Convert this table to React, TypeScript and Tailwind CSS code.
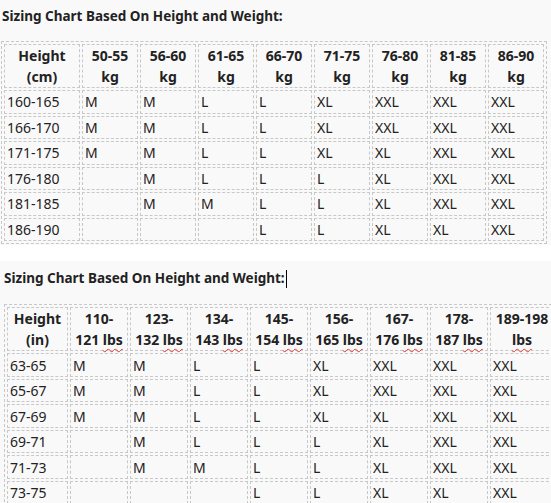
const kgHeaders = ["50-55", "56-60", "61-65", "66-70", "71-75", "76-80", "81-85", "86-90"];
const lbsHeaders = ["110-121", "123-132", "134-143", "145-154", "156-165", "167-176", "178-187", "189-198"];

const cmRows: string[][] = [
  ["160-165", "M", "M", "L", "L", "XL", "XXL", "XXL", "XXL"],
  ["166-170", "M", "M", "L", "L", "XL", "XXL", "XXL", "XXL"],
  ["171-175", "M", "M", "L", "L", "XL", "XL", "XXL", "XXL"],
  ["176-180", "", "M", "L", "L", "L", "XL", "XXL", "XXL"],
  ["181-185", "", "M", "M", "L", "L", "XL", "XXL", "XXL"],
  ["186-190", "", "", "", "L", "L", "XL", "XL", "XXL"],
];

const inRows: string[][] = [
  ["63-65", "M", "M", "L", "L", "XL", "XXL", "XXL", "XXL"],
  ["65-67", "M", "M", "L", "L", "XL", "XXL", "XXL", "XXL"],
  ["67-69", "M", "M", "L", "L", "XL", "XL", "XXL", "XXL"],
  ["69-71", "", "M", "L", "L", "L", "XL", "XXL", "XXL"],
  ["71-73", "", "M", "M", "L", "L", "XL", "XXL", "XXL"],
  ["73-75", "", "", "", "L", "L", "XL", "XL", "XXL"],
];

const cell = "border border-dashed border-[#c8c8c8] px-[2px] align-middle";

function Lbs() {
  return <span className="underline decoration-wavy decoration-[#e53935] decoration-1 underline-offset-[3px]">lbs</span>;
}

function Chart({
  unit,
  headers,
  rows,
  widths,
  lbs,
}: {
  unit: string;
  headers: string[];
  rows: string[][];
  widths: number[];
  lbs?: boolean;
}) {
  const total = widths.reduce((a, b) => a + b, 0) + 2 * (widths.length + 1) + 2;
  return (
    <table
      className="table-fixed border-separate border-spacing-[2px] border border-dashed border-[#c8c8c8]"
      style={{ width: total }}
    >
      <colgroup>
        {widths.map((w, i) => (
          <col key={i} style={{ width: w }} />
        ))}
      </colgroup>
      <thead>
        <tr className="h-[44px]">
          <th className={`${cell} text-center font-bold leading-[21px]`}>
            Height
            <br />({unit})
          </th>
          {headers.map((h) =>
            lbs ? (
              <th key={h} className={`${cell} text-center font-bold leading-[21px] whitespace-nowrap`}>
                {h === "189-198" ? (
                  <>
                    {h}
                    <br />
                    <Lbs />
                  </>
                ) : (
                  <>
                    {h.split("-")[0]}-
                    <br />
                    {h.split("-")[1]} <Lbs />
                  </>
                )}
              </th>
            ) : (
              <th key={h} className={`${cell} text-center font-bold leading-[21px]`}>
                {h}
                <br />
                kg
              </th>
            )
          )}
        </tr>
      </thead>
      <tbody>
        {rows.map((r) => (
          <tr key={r[0]} className="h-[23.5px]">
            {r.map((v, i) => (
              <td key={i} className={`${cell} leading-[19px]`}>
                {v}
              </td>
            ))}
          </tr>
        ))}
      </tbody>
    </table>
  );
}

export default function App() {
  return (
    <div
      className="w-[551px] h-[503px] overflow-hidden bg-white text-[14px] text-[#222]"
      style={{ fontFamily: '"Noto Sans", "Open Sans", sans-serif' }}
    >
      <div className="bg-[#f9f9f9] h-[245px] pl-[1px] pt-[6px]">
        <div className="font-bold text-[13.5px] leading-[20px] pl-[1px]">Sizing Chart Based On Height and Weight:</div>
        <div className="mt-[15px]">
          <Chart unit="cm" headers={kgHeaders} rows={cmRows} widths={[76, 56, 56, 56, 56, 56, 56, 56, 56]} />
        </div>
      </div>
      <div className="bg-[#f9f9f9] mt-[16px] h-[300px] pl-[4px] pt-[7px] overflow-hidden">
        <div className="font-bold text-[13.5px] leading-[20px]">
          Sizing Chart Based On Height and Weight:
          <span className="inline-block w-px h-[18px] bg-black align-middle ml-[1px]" />
        </div>
        <div className="mt-[16px]">
          <Chart unit="in" headers={lbsHeaders} rows={inRows} widths={[61, 58, 58, 58, 58, 58, 58, 58, 64]} lbs />
        </div>
      </div>
    </div>
  );
}
